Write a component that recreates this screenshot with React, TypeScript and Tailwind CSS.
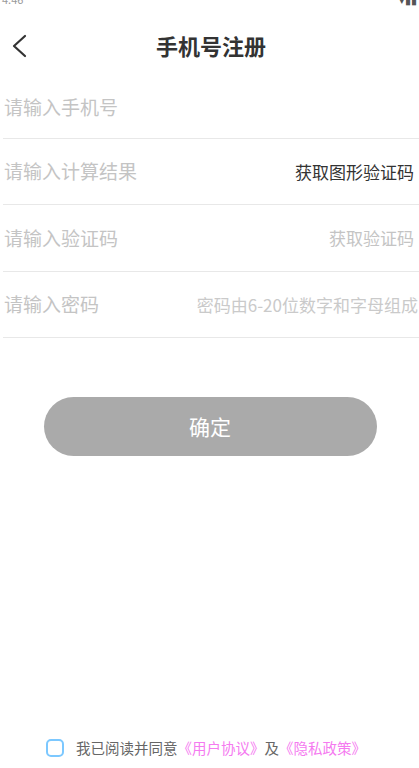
import React from "react";

export default function App() {
  const font = { fontFamily: '"Noto Sans CJK SC", "Noto Sans", sans-serif' };
  return (
    <div className="w-[419px] h-[768px] bg-white flex flex-col overflow-hidden relative" style={font}>
      <div className="h-[6px] flex justify-between items-start px-[2px] -mt-[6px]">
        <span className="text-[11px] leading-[11px] text-[#999]">4:46</span>
        <span className="text-[11px] leading-[11px] text-[#555]">▾▮▮</span>
      </div>
      <div className="h-[84px] flex items-center relative">
        <svg className="absolute left-[10px] top-[34px]" width="20" height="24" viewBox="0 0 20 24">
          <path d="M15 2 L4 12 L15 22" fill="none" stroke="#333" strokeWidth="2.2" strokeLinecap="round" strokeLinejoin="round" />
        </svg>
        <div className="flex-1 text-center text-[22px] font-semibold text-[#333] mt-[6px] pl-[3px]">手机号注册</div>
      </div>
      <div className="flex flex-col pl-[3px]">
        <div className="h-[55px] flex items-center border-b border-[#e8e8e8] pl-[1px] pb-[7px]">
          <span className="text-[19px] text-[#c4c4c4]">请输入手机号</span>
        </div>
        <div className="h-[66px] flex items-center justify-between border-b border-[#e8e8e8] pl-[1px] pr-[5px]">
          <span className="text-[19px] text-[#c4c4c4]">请输入计算结果</span>
          <span className="text-[17px] text-[#333]">获取图形验证码</span>
        </div>
        <div className="h-[67px] flex items-center justify-between border-b border-[#e8e8e8] pl-[1px] pr-[5px]">
          <span className="text-[19px] text-[#c4c4c4]">请输入验证码</span>
          <span className="text-[17px] text-[#c4c4c4]">获取验证码</span>
        </div>
        <div className="h-[66px] flex items-center justify-between border-b border-[#e8e8e8] pl-[1px] pr-[1px]">
          <span className="text-[19px] text-[#c4c4c4]">请输入密码</span>
          <span className="text-[17px] text-[#cacaca]">密码由6-20位数字和字母组成</span>
        </div>
      </div>
      <div className="flex justify-center mt-[59px] pr-[1px]">
        <div className="w-[333px] h-[59px] rounded-full bg-[#aaaaaa] flex items-center justify-center text-white text-[21px] ml-[2px]">
          确定
        </div>
      </div>
      <div className="flex-1" />
      <div className="h-[30px] flex items-start pl-[46px]">
        <div className="w-[18px] h-[18px] rounded-[5px] border-2 border-[#7cc8ff] mt-[1px]" />
        <span className="ml-[12px] text-[14.5px] leading-[20px] text-[#666]">我已阅读并同意</span>
        <span className="text-[14.5px] leading-[20px] text-[#f57af0]">《用户协议》</span>
        <span className="text-[14.5px] leading-[20px] text-[#666]">及</span>
        <span className="text-[14.5px] leading-[20px] text-[#f57af0]">《隐私政策》</span>
      </div>
    </div>
  );
}
